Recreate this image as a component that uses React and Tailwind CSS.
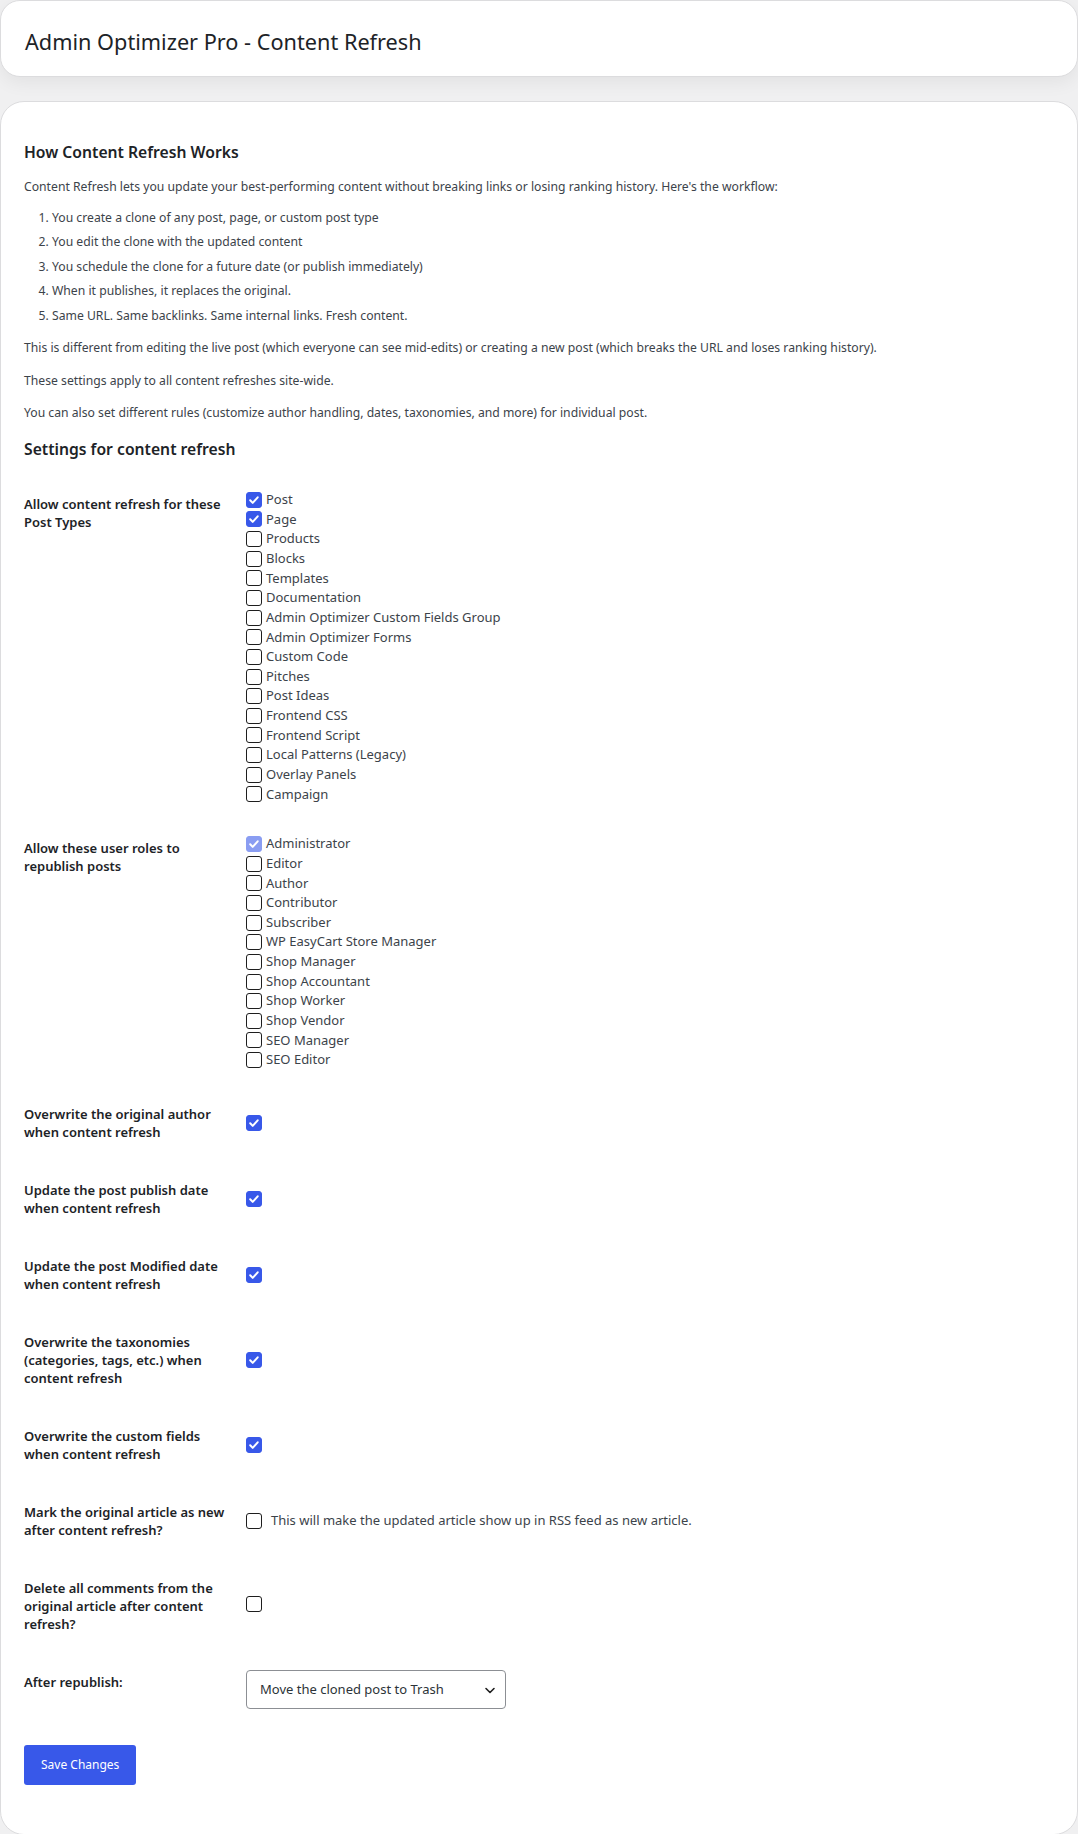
import { useState } from "react";

const POST_TYPES = [
  ["Post", true],
  ["Page", true],
  ["Products", false],
  ["Blocks", false],
  ["Templates", false],
  ["Documentation", false],
  ["Admin Optimizer Custom Fields Group", false],
  ["Admin Optimizer Forms", false],
  ["Custom Code", false],
  ["Pitches", false],
  ["Post Ideas", false],
  ["Frontend CSS", false],
  ["Frontend Script", false],
  ["Local Patterns (Legacy)", false],
  ["Overlay Panels", false],
  ["Campaign", false],
];

const ROLES = [
  "Administrator",
  "Editor",
  "Author",
  "Contributor",
  "Subscriber",
  "WP EasyCart Store Manager",
  "Shop Manager",
  "Shop Accountant",
  "Shop Worker",
  "Shop Vendor",
  "SEO Manager",
  "SEO Editor",
];

const Checkbox = ({ checked, disabled, onChange }) => (
  <span
    onClick={disabled ? undefined : onChange}
    className={
      "inline-flex h-4 w-4 shrink-0 items-center justify-center rounded-[3px] border " +
      (checked
        ? disabled
          ? "border-[#8a9df2] bg-[#8a9df2]"
          : "border-[#3858e9] bg-[#3858e9]"
        : "border-[#1e1e1e] bg-white")
    }>
    {checked && (
      <svg width="12" height="12" viewBox="0 0 12 12" fill="none">
        <path d="M2.2 6.3l2.5 2.6 5-5.6" stroke="white" strokeWidth="2" strokeLinecap="round" strokeLinejoin="round" />
      </svg>
    )}
  </span>
);

const CheckList = ({ items, values, setValues, locked = [] }) => (
  <div>
    {items.map((name) => (
      <label key={name} className="flex h-[19.65px] items-center gap-[4px] text-[13px] text-[#3c434a]">
        <Checkbox
          checked={values[name]}
          disabled={locked.includes(name)}
          onChange={() => setValues({ ...values, [name]: !values[name] })}
        />
        <span>{name}</span>
      </label>
    ))}
  </div>
);

// one settings row: label column on the left, controls on the right
const Row = ({ label, center, children, tdClass = "py-[15px]" }) => (
  <div className={"flex " + (center ? "items-center" : "items-start")}>
    <div className="w-[212px] shrink-0 whitespace-nowrap py-5 pr-[10px] text-[13px] font-semibold leading-[18px] text-[#1d2327]">
      {label}
    </div>
    <div className={"pl-[10px] " + tdClass}>{children}</div>
  </div>
);

const App = () => {
  const [types, setTypes] = useState(Object.fromEntries(POST_TYPES));
  const [roles, setRoles] = useState(
    Object.fromEntries(ROLES.map((r) => [r, r === "Administrator"]))
  );
  const [opts, setOpts] = useState({
    author: true,
    publish: true,
    modified: true,
    taxonomies: true,
    fields: true,
    markNew: false,
    deleteComments: false,
  });
  const toggle = (k) => setOpts({ ...opts, [k]: !opts[k] });

  return (
    <div className="min-h-screen bg-[#f0f0f1] font-['Noto_Sans',sans-serif] text-[#3c434a]">
      <div className="rounded-[20px] border border-[#dcdcde] bg-white px-6 pb-[18px] pt-[25px] shadow-[0_6px_18px_rgba(0,0,0,0.06)]">
        <h1 className="text-[21.7px] font-normal leading-[32px] text-[#1d2327]">
          Admin Optimizer Pro - Content Refresh
        </h1>
      </div>

      <div className="mt-[24px] rounded-[24px] border border-[#dcdcde] bg-white px-[23px] pb-[49px] pt-[38px]">
        <h2 className="text-[15.7px] font-semibold leading-[24px] text-[#1d2327]">How Content Refresh Works</h2>
        <p className="mt-[13px] text-[12.2px] leading-[19.5px]">
          Content Refresh lets you update your best-performing content without breaking links or losing ranking
          history. Here's the workflow:
        </p>
        <ol className="mt-[12px] list-decimal pl-[28px] text-[12.2px] leading-[18.6px]">
          <li className="mb-[6px]">You create a clone of any post, page, or custom post type</li>
          <li className="mb-[6px]">You edit the clone with the updated content</li>
          <li className="mb-[6px]">You schedule the clone for a future date (or publish immediately)</li>
          <li className="mb-[6px]">When it publishes, it replaces the original.</li>
          <li className="mb-[6px]">Same URL. Same backlinks. Same internal links. Fresh content.</li>
        </ol>
        <p className="mt-[13px] text-[12.2px] leading-[19.5px]">
          This is different from editing the live post (which everyone can see mid-edits) or creating a new post
          (which breaks the URL and loses ranking history).
        </p>
        <p className="mt-[13px] text-[12.2px] leading-[19.5px]">These settings apply to all content refreshes site-wide.</p>
        <p className="mt-[13px] text-[12.2px] leading-[19.5px]">
          You can also set different rules (customize author handling, dates, taxonomies, and more) for individual post.
        </p>

        <h2 className="mt-[14px] text-[15.7px] font-semibold leading-[24px] text-[#1d2327]">
          Settings for content refresh
        </h2>

        <div className="mt-[14px]">
          <Row label={<>Allow content refresh for these<br />Post Types</>}>
            <CheckList items={POST_TYPES.map((p) => p[0])} values={types} setValues={setTypes} />
          </Row>
          <Row label={<>Allow these user roles to<br />republish posts</>}>
            <CheckList items={ROLES} values={roles} setValues={setRoles} locked={["Administrator"]} />
          </Row>
          <Row center label={<>Overwrite the original author<br />when content refresh</>}>
            <Checkbox checked={opts.author} onChange={() => toggle("author")} />
          </Row>
          <Row center label={<>Update the post publish date<br />when content refresh</>}>
            <Checkbox checked={opts.publish} onChange={() => toggle("publish")} />
          </Row>
          <Row center label={<>Update the post Modified date<br />when content refresh</>}>
            <Checkbox checked={opts.modified} onChange={() => toggle("modified")} />
          </Row>
          <Row center label={<>Overwrite the taxonomies<br />(categories, tags, etc.) when<br />content refresh</>}>
            <Checkbox checked={opts.taxonomies} onChange={() => toggle("taxonomies")} />
          </Row>
          <Row center label={<>Overwrite the custom fields<br />when content refresh</>}>
            <Checkbox checked={opts.fields} onChange={() => toggle("fields")} />
          </Row>
          <Row center label={<>Mark the original article as new<br />after content refresh?</>}>
            <div className="flex items-center gap-[9px] text-[13px]">
              <Checkbox checked={opts.markNew} onChange={() => toggle("markNew")} />
              <span>This will make the updated article show up in RSS feed as new article.</span>
            </div>
          </Row>
          <Row center label={<>Delete all comments from the<br />original article after content<br />refresh?</>}>
            <Checkbox checked={opts.deleteComments} onChange={() => toggle("deleteComments")} />
          </Row>
          <Row label="After republish:" tdClass="pt-[17px] pb-[15px]">
            <div className="relative">
              <select className="h-[39px] w-[260px] appearance-none rounded-[4px] border border-[#8c8f94] bg-white pl-[13px] pr-8 text-[13px] text-[#2c3338] outline-none">
                <option>Move the cloned post to Trash</option>
                <option>Keep the cloned post as draft</option>
                <option>Delete the cloned post permanently</option>
              </select>
              <svg
                className="pointer-events-none absolute right-[9px] top-[13px]"
                width="14"
                height="14"
                viewBox="0 0 14 14"
                fill="none">
                <path d="M3 5.5l4 4 4-4" stroke="#1e1e1e" strokeWidth="1.6" strokeLinecap="round" strokeLinejoin="round" />
              </svg>
            </div>
          </Row>
        </div>

        <button className="mt-[21px] h-10 rounded-[3px] bg-[#3858e9] px-[17px] text-[12px] text-white">
          Save Changes
        </button>
      </div>
    </div>
  );
};

export default App;
